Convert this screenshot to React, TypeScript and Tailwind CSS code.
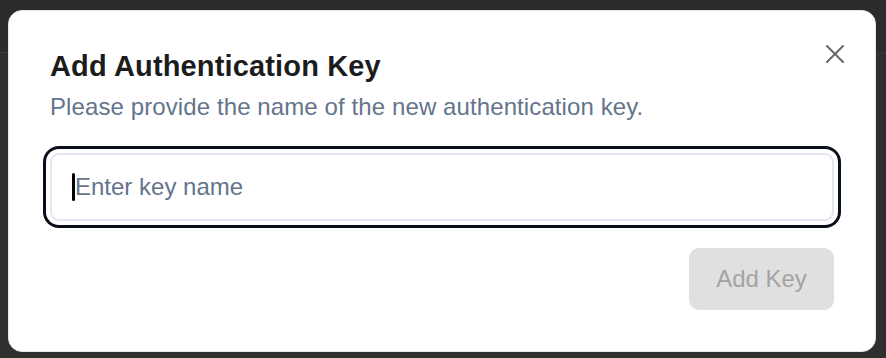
import { X } from "lucide-react";

export default function App() {
  return (
    <div className="relative h-[358px] w-[886px] overflow-hidden bg-[#2f2f2f] font-['Liberation_Sans',Arial,sans-serif]">
      {/* page header showing through the overlay */}
      <div className="absolute inset-x-0 top-0 h-[53px] border-b border-[#3a3a3a] bg-[#2b2b2b]" />

      <div className="relative flex pl-[8px] pr-[10px] pt-[10px]">
        {/* dialog */}
        <div className="relative flex w-full flex-col rounded-[14px] border border-[#e6e6e6] bg-white px-[41px] pb-[41px] pt-[38px]">
          <button
            type="button"
            className="absolute right-[24px] top-[27px] text-[#666666]"
            aria-label="Close"
          >
            <X size={32} strokeWidth={1.5} />
          </button>

          <h2 className="text-[29px] font-bold leading-[35px] tracking-[0.15px] text-[#1c1c1c]">
            Add Authentication Key
          </h2>
          <p className="mt-[7px] text-[24px] leading-[32px] tracking-[0.1px] text-[#64748b]">
            Please provide the name of the new authentication key.
          </p>

          <div className="relative mt-[30px]">
            <input
              type="text"
              placeholder="Enter key name"
              className="h-[68px] w-full rounded-[9px] border-2 border-[#e2e8f0] bg-white px-[23px] text-[24px] text-[#1c1c1c] outline-none ring-[3px] ring-[#0b0f19] ring-offset-[4px] placeholder:text-[#64748b]"
            />
            <span className="absolute left-[22px] top-[20px] h-[28px] w-[3px] rounded-sm bg-black" />
          </div>

          <div className="mt-[27px] flex justify-end">
            <button
              type="button"
              disabled
              className="h-[62px] w-[145px] rounded-[10px] bg-[#e0e0e0] text-[24px] text-[#a3a3a3]"
            >
              Add Key
            </button>
          </div>
        </div>
      </div>
    </div>
  );
}
